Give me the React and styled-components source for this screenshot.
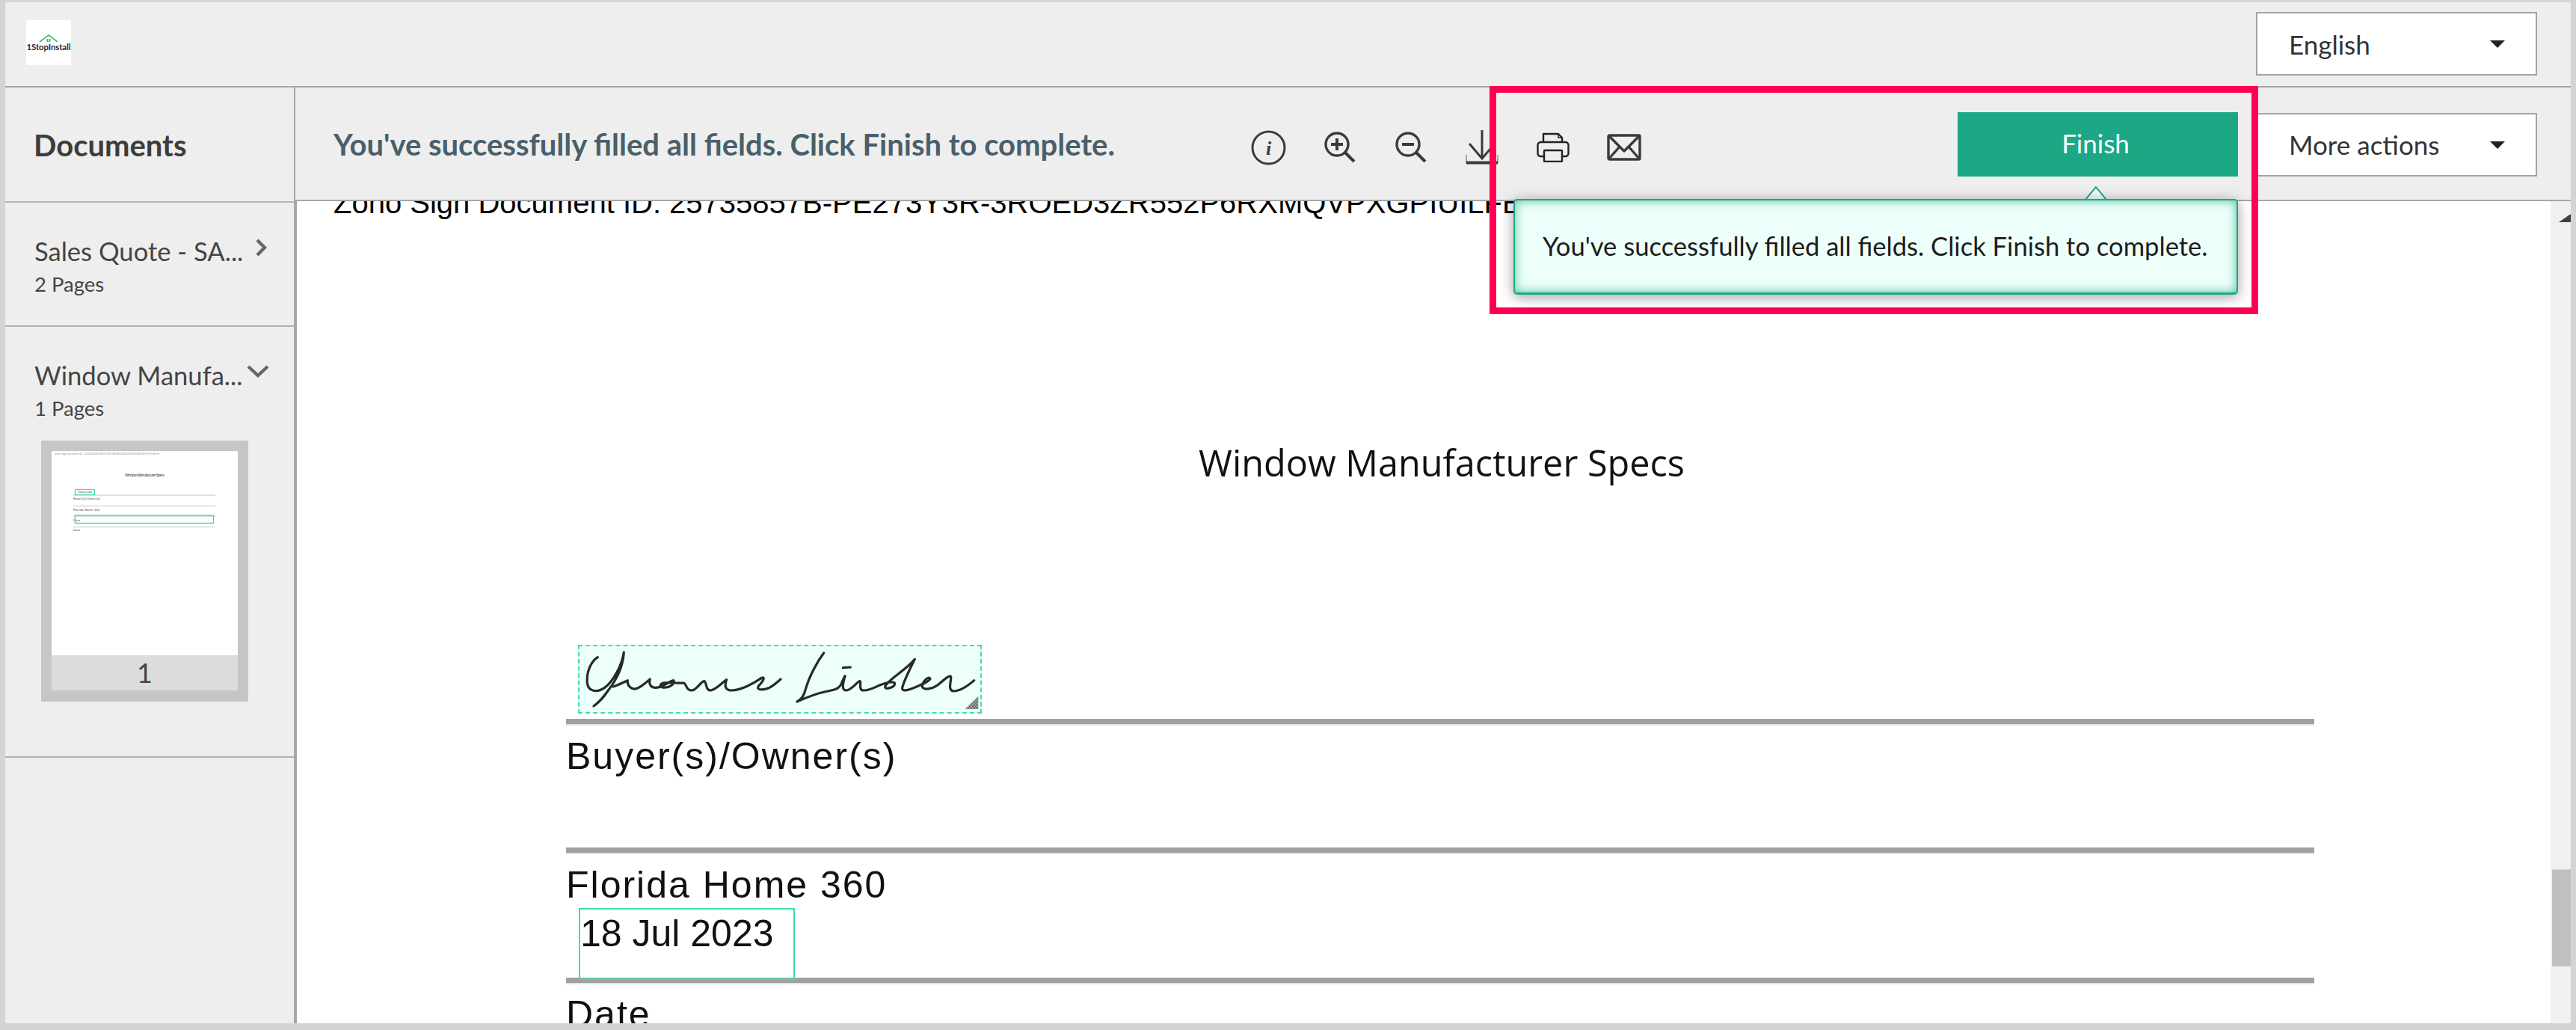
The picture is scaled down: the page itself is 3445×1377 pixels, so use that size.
import React from "react";
import styled, { createGlobalStyle } from "styled-components";

const GlobalStyle = createGlobalStyle`
  html, body { margin: 0; padding: 0; overflow: hidden; }
  * { box-sizing: border-box; }
  body { font-family: "Lato", "Liberation Sans", sans-serif; background: #d4d4d4; }
`;

const Shell = styled.div`
  position: relative;
  width: 3445px;
  height: 1377px;
  padding: 3px 7px 9px 7px;
  background: #d4d4d4;
  overflow: hidden;
`;

const Inner = styled.div`
  height: 100%;
  display: flex;
  flex-direction: column;
  background: #eeeeee;
  overflow: hidden;
`;

const Header = styled.header`
  flex: none;
  height: 114px;
  display: flex;
  justify-content: space-between;
  align-items: flex-start;
  padding: 13px 45px 0 28px;
  border-bottom: 2px solid #a6a6a6;
`;

const LogoBox = styled.div`
  width: 60px;
  height: 60px;
  margin-top: 11px;
  background: #fff;
  display: flex;
  flex-direction: column;
  align-items: center;
  padding-top: 19px;
`;

const LogoText = styled.span`
  font-family: "Lato", sans-serif;
  font-weight: 700;
  font-size: 11.4px;
  line-height: 11px;
  letter-spacing: -0.1px;
  color: #1d2b3f;
  white-space: nowrap;
`;

const Select = styled.div`
  width: 376px;
  height: 85px;
  display: flex;
  align-items: center;
  justify-content: space-between;
  padding: 0 41px 0 42px;
  background: #fff;
  border: 2px solid #a3a3a3;
  font-size: 35px;
  color: #333;
`;

const Caret = styled.span`
  width: 0;
  height: 0;
  border-left: 10px solid transparent;
  border-right: 10px solid transparent;
  border-top: 10px solid #222;
  margin-top: 1px;
`;

const Body = styled.div`
  flex: 1;
  min-height: 0;
  display: flex;
`;

const Sidebar = styled.aside`
  flex: none;
  width: 388px;
  border-right: 2px solid #a6a6a6;
`;

const SideHead = styled.div`
  height: 154px;
  display: flex;
  align-items: center;
  padding: 2px 0 0 38px;
  border-bottom: 2px solid #b4b4b4;
  font-size: 40px;
  font-weight: 700;
  color: #3c3c3c;
`;

const DocItem = styled.div`
  height: ${(p) => p.$height}px;
  padding: 46px 0 0 39px;
  border-bottom: 2px solid #b0b0b0;
`;

const DocTitleRow = styled.div`
  display: flex;
  align-items: center;
  height: 36px;
  font-size: 34.6px;
  color: #454545;
  white-space: nowrap;
`;

const Chevron = styled.svg`
  flex: none;
  margin-left: ${(p) => p.$gap}px;
  margin-top: -8px;
`;

const PageCount = styled.div`
  margin-top: 9px;
  font-size: 27.5px;
  line-height: 36px;
  color: #454545;
`;

const ThumbFrame = styled.div`
  width: 277px;
  height: 349px;
  margin: 25px 0 0 9px;
  padding: 14px 14px 15px;
  background: #c6c6c6;
`;

const ThumbPage = styled.svg`
  display: block;
  width: 249px;
  height: 273px;
  background: #fff;
`;

const ThumbNumber = styled.div`
  height: 47px;
  background: #dcdcdc;
  text-align: center;
  font-size: 36px;
  line-height: 47px;
  color: #444;
`;

const Main = styled.main`
  flex: 1;
  min-width: 0;
  display: flex;
  flex-direction: column;
`;

const Toolbar = styled.div`
  flex: none;
  height: 152px;
  display: flex;
  align-items: center;
  padding: 2px 45px 0 51px;
  border-bottom: 2px solid #a6a6a6;
`;

const Message = styled.div`
  flex: none;
  width: 1203px;
  font-size: 40px;
  font-weight: 700;
  color: #4a5f6b;
  white-space: nowrap;
`;

const IconGroup = styled.div`
  display: flex;
  align-items: center;
`;

const IconSlot = styled.div`
  width: 95px;
  display: flex;
  justify-content: center;
  margin-top: 8px;
`;

const FinishButton = styled.button`
  width: 375px;
  height: 86px;
  margin-left: auto;
  border: none;
  background: #1ca884;
  color: #fff;
  font-family: "Lato", sans-serif;
  font-size: 35px;
  padding: 0 6px 4px 0;
`;

const MoreSelect = styled(Select)`
  margin-left: 24px;
`;

const DocArea = styled.div`
  flex: 1;
  min-height: 0;
  display: flex;
  background: #fff;
  border-left: 2px solid #a6a6a6;
`;

const DocScroll = styled.div`
  flex: 1;
  min-width: 0;
  overflow: hidden;
`;

const IdLine = styled.div`
  margin-top: -20px;
  padding-left: 49px;
  font-family: "Liberation Sans", Arial, sans-serif;
  font-size: 40px;
  line-height: 44px;
  color: #000;
  white-space: nowrap;
`;

const Specs = styled.div`
  margin: 295px 316px 0 360px;
`;

const SpecsTitle = styled.div`
  padding-left: 4px;
  font-family: "Open Sans", sans-serif;
  font-size: 48.6px;
  line-height: 60px;
  text-align: center;
  color: #111;
  margin-bottom: 214px;
`;

const SignatureBox = styled.div`
  position: relative;
  z-index: 1;
  width: 540px;
  height: 92px;
  margin-left: 16px;
  background: #edfffa;
  border: 2px dashed #3ddcb0;
`;

const SignatureInk = styled.svg`
  display: block;
  width: 100%;
  height: 100%;
`;

const Rule = styled.div`
  height: 9px;
  margin-top: ${(p) => p.$top}px;
  background: #a0a0a0;
  border-bottom: 2px solid #e2e2e2;
`;

const SpecLabel = styled.div`
  margin-top: ${(p) => p.$top}px;
  font-family: "Liberation Sans", Arial, sans-serif;
  font-size: 50px;
  line-height: 56px;
  letter-spacing: 2px;
  color: #111;
  white-space: nowrap;
`;

const DateField = styled.div`
  position: relative;
  z-index: 1;
  width: 289px;
  height: 96px;
  margin: 3px 0 -3px 17px;
  padding: 4px 0 0 0;
  border: 2px solid #3ddcb0;
  font-family: "Liberation Sans", Arial, sans-serif;
  font-size: 50px;
  line-height: 56px;
  color: #111;
  white-space: nowrap;
`;

const Scrollbar = styled.div`
  flex: none;
  position: relative;
  width: 27px;
  background: #f0f0f0;
  overflow: hidden;
`;

const ScrollArrow = styled.span`
  position: absolute;
  top: 17px;
  right: -16px;
  width: 0;
  height: 0;
  border-left: 16px solid transparent;
  border-right: 16px solid transparent;
  border-bottom: 11px solid #3f3f3f;
`;

const ScrollThumb = styled.div`
  height: 130px;
  margin: 893px 0 0 2px;
  background: #c0c0c0;
  border-top: 1px solid #d4d4d4;
`;

const Tooltip = styled.div`
  position: absolute;
  left: 2024px;
  top: 266px;
  width: 969px;
  height: 128px;
  display: flex;
  align-items: center;
  padding: 0 0 3px 37px;
  background: #edfffa;
  border: 2px solid #1ca884;
  border-bottom-width: 3px;
  border-radius: 5px;
  box-shadow: inset 0 0 14px rgba(28, 168, 132, 0.75), 0 3px 18px rgba(0, 0, 0, 0.38);
  font-size: 34.6px;
  color: #1c1c1c;
  white-space: nowrap;
`;

const TooltipArrow = styled.svg`
  position: absolute;
  left: 2788px;
  top: 249px;
`;

const Highlight = styled.div`
  position: absolute;
  left: 1992px;
  top: 115px;
  width: 1028px;
  height: 305px;
  border: 9px solid #ff0050;
  pointer-events: none;
`;

const iconStroke = "#3a3a3a";

const InfoIcon = () => (
  <svg width="47" height="47" viewBox="0 0 47 47" fill="none">
    <circle cx="23.5" cy="23.5" r="21.5" stroke={iconStroke} strokeWidth="3" />
    <text x="23.5" y="33" textAnchor="middle" fontFamily="Liberation Serif, serif" fontStyle="italic" fontWeight="700" fontSize="26" fill={iconStroke}>i</text>
  </svg>
);

const ZoomIcon = ({ plus }) => (
  <svg width="42" height="42" viewBox="0 0 42 42" fill="none">
    <circle cx="17" cy="17" r="15" stroke={iconStroke} strokeWidth="3.4" />
    <path d="M28 28 L40 40" stroke={iconStroke} strokeWidth="4" />
    <path d="M9 17 H25" stroke={iconStroke} strokeWidth="4" />
    {plus && <path d="M17 9 V25" stroke={iconStroke} strokeWidth="4" />}
  </svg>
);

const DownloadIcon = () => (
  <svg width="44" height="46" viewBox="0 0 44 46" fill="none">
    <path d="M22 0 V37" stroke={iconStroke} strokeWidth="3" />
    <path d="M5 18 L22 38 L39 18" stroke={iconStroke} strokeWidth="3" />
    <path d="M1 33 V44 H43 V33" stroke="#888" strokeWidth="1.4" />
    <path d="M1 43.5 H43" stroke={iconStroke} strokeWidth="4" />
  </svg>
);

const PrintIcon = () => (
  <svg width="44" height="40" viewBox="0 0 44 40" fill="none" stroke="#222" strokeWidth="2.4" strokeLinejoin="round">
    <path d="M9 13 V2 H29 L34 7 V13" />
    <path d="M29 2 V7 H34" strokeWidth="1.6" />
    <rect x="1.5" y="13" width="41" height="19" rx="4" />
    <rect x="10" y="24" width="24" height="15" rx="1" fill="#eeeeee" />
  </svg>
);

const MailIcon = () => (
  <svg width="46" height="36" viewBox="0 0 46 36" fill="none" stroke={iconStroke} strokeWidth="3.4" strokeLinejoin="round">
    <rect x="2" y="2" width="42" height="32" rx="1.5" />
    <path d="M2 2 L23 23 L44 2" />
    <path d="M2 34 L17 17 M44 34 L29 17" />
  </svg>
);

const inkProps = {
  vectorEffect: "non-scaling-stroke",
  stroke: "#262a29",
  strokeWidth: 3.2,
  strokeLinecap: "round",
  strokeLinejoin: "round",
};

const Signature = () => (
  <SignatureInk viewBox="15 18 1608 264" preserveAspectRatio="none" fill="none">
    <defs>
      <pattern id="grip" width="6" height="6" patternUnits="userSpaceOnUse">
        <rect width="6" height="6" fill="#b5bcba" />
        <rect width="3" height="3" fill="#555" />
        <rect x="3" y="3" width="3" height="3" fill="#555" />
      </pattern>
    </defs>
    <path {...inkProps} d="M88 62 C62 78 42 120 46 165 C50 200 85 205 115 185 C150 160 185 95 193 42 C190 95 165 150 130 195 C110 225 90 245 72 258" />
    <path {...inkProps} d="M150 180 C175 172 195 160 208 155 C205 175 225 198 250 185 C268 176 285 160 298 150 C292 170 300 190 335 182 C360 176 375 158 392 155 C402 165 375 190 345 182 C335 178 340 168 350 165 C375 160 410 168 432 165 C445 165 440 195 465 195 C485 195 500 160 515 158 C525 158 520 195 540 195 C560 195 585 165 605 152 C598 170 595 195 625 195 C660 195 710 170 745 145 C760 138 755 155 735 175 C720 195 750 195 775 185 C795 175 810 160 822 150" />
    <g transform="translate(810 0)">
      <path {...inkProps} d="M185 45 C160 78 128 135 112 190 C106 212 100 228 78 240 C105 228 150 208 200 198 C222 194 240 192 252 175 C258 165 262 150 270 138" />
      <path {...inkProps} d="M262 104 L292 102" />
      <path {...inkProps} d="M270 138 C262 165 255 195 275 195 C295 195 315 165 328 158 C340 155 320 195 345 195 C375 195 395 178 420 170 C445 160 470 158 470 168 C468 185 425 195 432 178 C445 150 520 110 550 70 C530 110 505 160 500 185 C498 200 520 195 545 185 C570 175 610 158 612 148 C605 135 580 160 580 180 C585 195 620 190 640 175 C665 155 690 130 695 140 C698 155 680 195 705 198 C730 198 765 175 788 155" />
      <polygon points="752,270 805,218 805,270" fill="url(#grip)" />
    </g>
  </SignatureInk>
);

const thumbLabel = { fontSize: 3.8, fill: "#333", fontFamily: "Liberation Sans, sans-serif" };

const Thumbnail = () => (
  <ThumbPage viewBox="0 0 249 273">
    <text x="4" y="5" fontSize="3.8" fill="#999" fontFamily="Liberation Sans, sans-serif" textLength="140">Zoho Sign Document ID: 25735857B-PE273Y3R-3ROED3ZR552P6RXMQVPXGPIUILFE</text>
    <text x="124.5" y="34" fontSize="5" fill="#222" fontFamily="Open Sans, sans-serif" textAnchor="middle" textLength="53">Window Manufacturer Specs</text>
    <path d="M29 59 H219 M29 73.5 H219 M29 87 H219 M29 101.5 H219" stroke="#c4c4c4" strokeWidth="1.2" />
    <rect x="31.5" y="51.5" width="26" height="7" fill="none" stroke="#3ddcb0" strokeWidth="1.2" />
    <text x="35" y="56" fontSize="3" fill="#333" fontFamily="Liberation Sans, sans-serif">Yvonne Linder</text>
    <text x="29" y="65" {...thumbLabel} textLength="36">Buyer(s)/Owner(s)</text>
    <text x="29" y="79.5" {...thumbLabel} textLength="35">Florida Home 360</text>
    <text x="29" y="93.5" {...thumbLabel} textLength="9">Date</text>
    <rect x="31.5" y="86" width="185" height="10.5" fill="none" stroke="#3ddcb0" strokeWidth="1.4" />
    <text x="29" y="107" {...thumbLabel} textLength="9">Date</text>
  </ThumbPage>
);

export default function App() {
  return (
    <Shell>
      <GlobalStyle />
      <Inner>
        <Header>
          <LogoBox>
            <svg width="26" height="11" viewBox="0 0 26 11" fill="none">
              <path d="M1 10 L13 1 L25 10" stroke="#3fbf6f" strokeWidth="1.6" />
              <rect x="10.5" y="6" width="2" height="4" fill="#3fbf6f" />
              <rect x="13.5" y="6" width="2" height="4" fill="#3fbf6f" />
            </svg>
            <LogoText>1StopInstall</LogoText>
          </LogoBox>
          <Select>
            English
            <Caret />
          </Select>
        </Header>
        <Body>
          <Sidebar>
            <SideHead>Documents</SideHead>
            <DocItem $height={166}>
              <DocTitleRow>
                Sales Quote - SA...
                <Chevron $gap={16} width="16" height="26" viewBox="0 0 16 26" fill="none">
                  <path d="M3 3 L13 13 L3 23" stroke="#666" strokeWidth="4.4" />
                </Chevron>
              </DocTitleRow>
              <PageCount>2 Pages</PageCount>
            </DocItem>
            <DocItem $height={576}>
              <DocTitleRow>
                Window Manufa...
                <Chevron $gap={6} width="30" height="20" viewBox="0 0 30 20" fill="none">
                  <path d="M2 3 L15 15 L28 3" stroke="#666" strokeWidth="4.4" />
                </Chevron>
              </DocTitleRow>
              <PageCount>1 Pages</PageCount>
              <ThumbFrame>
                <Thumbnail />
                <ThumbNumber>1</ThumbNumber>
              </ThumbFrame>
            </DocItem>
          </Sidebar>
          <Main>
            <Toolbar>
              <Message>You've successfully filled all fields. Click Finish to complete.</Message>
              <IconGroup>
                <IconSlot><InfoIcon /></IconSlot>
                <IconSlot><ZoomIcon plus /></IconSlot>
                <IconSlot><ZoomIcon /></IconSlot>
                <IconSlot><DownloadIcon /></IconSlot>
                <IconSlot><PrintIcon /></IconSlot>
                <IconSlot><MailIcon /></IconSlot>
              </IconGroup>
              <FinishButton>Finish</FinishButton>
              <MoreSelect>
                More actions
                <Caret />
              </MoreSelect>
            </Toolbar>
            <DocArea>
              <DocScroll>
                <IdLine>Zoho Sign Document ID: 25735857B-PE273Y3R-3ROED3ZR552P6RXMQVPXGPIUILFE</IdLine>
                <Specs>
                  <SpecsTitle>Window Manufacturer Specs</SpecsTitle>
                  <SignatureBox>
                    <Signature />
                  </SignatureBox>
                  <Rule $top={7} />
                  <SpecLabel $top={13}>Buyer(s)/Owner(s)</SpecLabel>
                  <Rule $top={94} />
                  <SpecLabel $top={13}>Florida Home 360</SpecLabel>
                  <DateField>18 Jul 2023</DateField>
                  <Rule $top={0} />
                  <SpecLabel $top={12}>Date</SpecLabel>
                </Specs>
              </DocScroll>
              <Scrollbar>
                <ScrollArrow />
                <ScrollThumb />
              </Scrollbar>
            </DocArea>
          </Main>
        </Body>
      </Inner>
      <TooltipArrow width="30" height="18" viewBox="0 0 30 18">
        <path d="M1 18 L15 1 L29 18 Z" fill="#edfffa" stroke="#1ca884" strokeWidth="2" />
      </TooltipArrow>
      <Tooltip>You've successfully filled all fields. Click Finish to complete.</Tooltip>
      <Highlight />
    </Shell>
  );
}
